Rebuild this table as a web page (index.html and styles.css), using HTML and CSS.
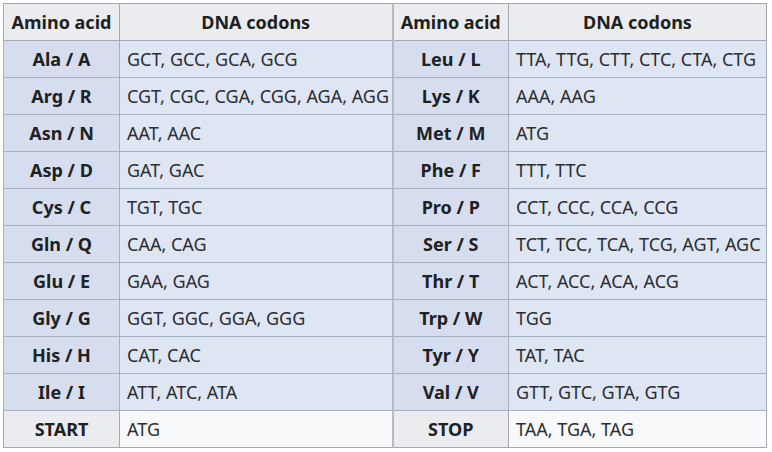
FILE: index.html
```html
<!DOCTYPE html>
<html>
<head>
<meta charset="utf-8">
<link rel="stylesheet" href="styles.css">
</head>
<body>
<table class="codons">
  <colgroup>
    <col class="c-aa"><col class="c-dna"><col class="c-aa"><col class="c-dna2">
  </colgroup>
  <thead>
    <tr><th>Amino acid</th><th>DNA codons</th><th class="split">Amino acid</th><th>DNA codons</th></tr>
  </thead>
  <tbody>
    <tr class="aa"><th>Ala / A</th><td>GCT, GCC, GCA, GCG</td><th class="split">Leu / L</th><td>TTA, TTG, CTT, CTC, CTA, CTG</td></tr>
    <tr class="aa"><th>Arg / R</th><td>CGT, CGC, CGA, CGG, AGA, AGG</td><th class="split">Lys / K</th><td>AAA, AAG</td></tr>
    <tr class="aa"><th>Asn / N</th><td>AAT, AAC</td><th class="split">Met / M</th><td>ATG</td></tr>
    <tr class="aa"><th>Asp / D</th><td>GAT, GAC</td><th class="split">Phe / F</th><td>TTT, TTC</td></tr>
    <tr class="aa"><th>Cys / C</th><td>TGT, TGC</td><th class="split">Pro / P</th><td>CCT, CCC, CCA, CCG</td></tr>
    <tr class="aa"><th>Gln / Q</th><td>CAA, CAG</td><th class="split">Ser / S</th><td>TCT, TCC, TCA, TCG, AGT, AGC</td></tr>
    <tr class="aa"><th>Glu / E</th><td>GAA, GAG</td><th class="split">Thr / T</th><td>ACT, ACC, ACA, ACG</td></tr>
    <tr class="aa"><th>Gly / G</th><td>GGT, GGC, GGA, GGG</td><th class="split">Trp / W</th><td>TGG</td></tr>
    <tr class="aa"><th>His / H</th><td>CAT, CAC</td><th class="split">Tyr / Y</th><td>TAT, TAC</td></tr>
    <tr class="aa"><th>Ile / I</th><td>ATT, ATC, ATA</td><th class="split">Val / V</th><td>GTT, GTC, GTA, GTG</td></tr>
    <tr class="ctl"><th>START</th><td>ATG</td><th class="split">STOP</th><td>TAA, TGA, TAG</td></tr>
  </tbody>
</table>
</body>
</html>
```
FILE: styles.css
```css
html, body {
  margin: 0;
  padding: 0;
  background: #ffffff;
}
body {
  padding: 3px 0 0 3px;
  font-family: "Noto Sans", "Open Sans", sans-serif;
  font-size: 18px;
  color: #202122;
}
.codons {
  border-collapse: collapse;
  table-layout: fixed;
  width: 763px;
  border: 1px solid #a2a9b1;
}
.c-aa { width: 116px; }
.c-dna { width: 273px; }
.c-dna2 { width: 258px; }
.codons th, .codons td {
  border: 1px solid #a7b0c2;
  height: 37px;
  padding: 0 7px;
  box-sizing: border-box;
  white-space: nowrap;
  overflow: hidden;
}
.codons th {
  font-weight: 700;
  text-align: center;
}
.codons td {
  text-align: left;
  color: #2b2d30;
}
.codons thead th {
  background: #eaecf0;
  border-color: #a2a9b1;
}
.codons th.split {
  border-left: 2px solid #b4bbc7;
}
.aa th {
  background: #d6ddee;
}
.aa td {
  background: #dee5f3;
}
.ctl th {
  background: #eaecf0;
  border-color: #a2a9b1;
}
.ctl td {
  background: #f8f9fa;
  border-color: #a2a9b1;
}
```
